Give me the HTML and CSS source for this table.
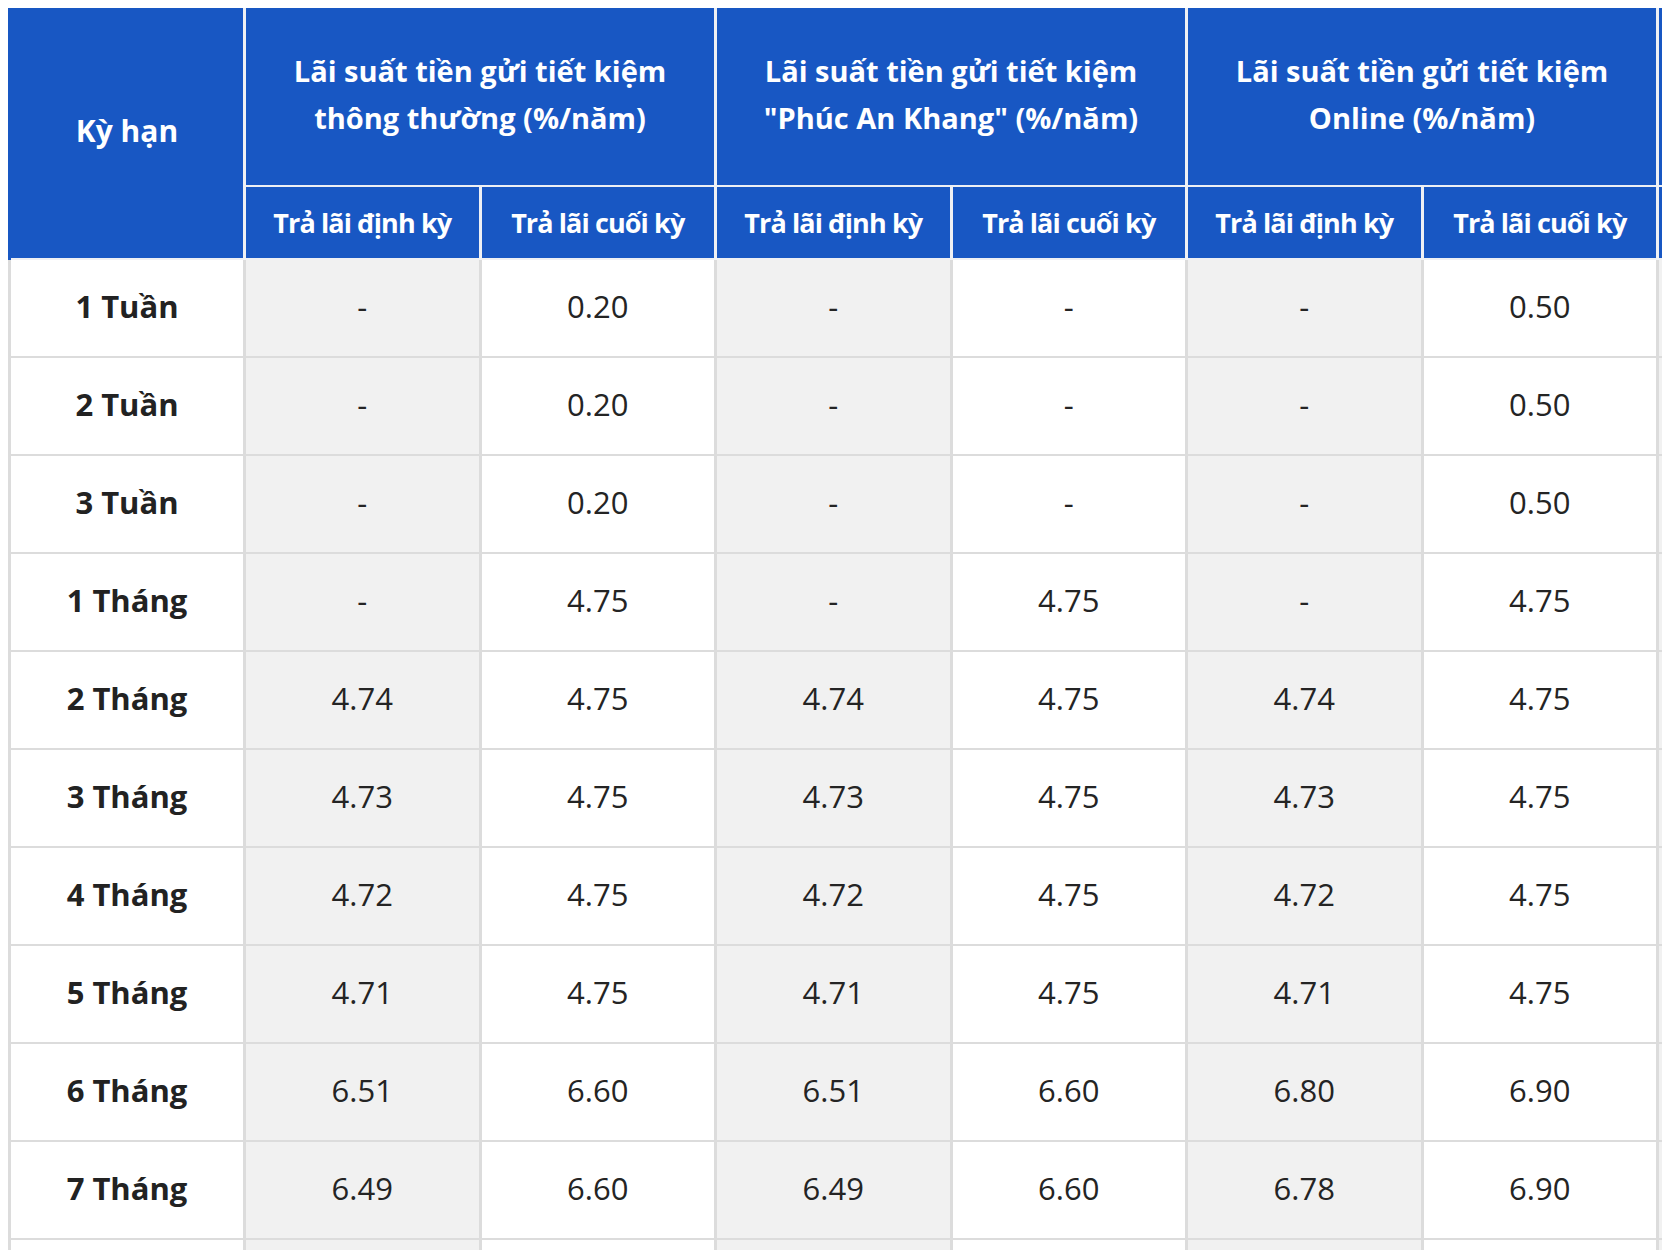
FILE: index.html
```html
<!DOCTYPE html>
<html lang="vi">
<head>
<meta charset="utf-8">
<title>Lãi suất tiền gửi tiết kiệm</title>
<link rel="stylesheet" href="styles.css">
</head>
<body>
<div class="wrap">
<table class="rates">
  <colgroup>
    <col class="c-term">
    <col class="c-val"><col class="c-val">
    <col class="c-val"><col class="c-val">
    <col class="c-val"><col class="c-val">
    <col class="c-val"><col class="c-val">
  </colgroup>
  <thead>
    <tr class="h1">
      <th rowspan="2" class="term-h">Kỳ hạn</th>
      <th colspan="2">Lãi suất tiền gửi tiết kiệm<br>thông thường (%/năm)</th>
      <th colspan="2">Lãi suất tiền gửi tiết kiệm<br>"Phúc An Khang" (%/năm)</th>
      <th colspan="2">Lãi suất tiền gửi tiết kiệm<br>Online (%/năm)</th>
      <th colspan="2">Lãi suất tiền gửi tiết kiệm<br>Bậc thang (%/năm)</th>
    </tr>
    <tr class="h2">
      <th class="sub">Trả lãi định kỳ</th><th class="sub">Trả lãi cuối kỳ</th>
      <th class="sub">Trả lãi định kỳ</th><th class="sub">Trả lãi cuối kỳ</th>
      <th class="sub">Trả lãi định kỳ</th><th class="sub">Trả lãi cuối kỳ</th>
      <th class="sub">Trả lãi định kỳ</th><th class="sub">Trả lãi cuối kỳ</th>
    </tr>
  </thead>
  <tbody>
    <tr><td class="term">1 Tuần</td><td class="alt">-</td><td>0.20</td><td class="alt">-</td><td>-</td><td class="alt">-</td><td>0.50</td><td class="alt">-</td><td>-</td></tr>
    <tr><td class="term">2 Tuần</td><td class="alt">-</td><td>0.20</td><td class="alt">-</td><td>-</td><td class="alt">-</td><td>0.50</td><td class="alt">-</td><td>-</td></tr>
    <tr><td class="term">3 Tuần</td><td class="alt">-</td><td>0.20</td><td class="alt">-</td><td>-</td><td class="alt">-</td><td>0.50</td><td class="alt">-</td><td>-</td></tr>
    <tr><td class="term">1 Tháng</td><td class="alt">-</td><td>4.75</td><td class="alt">-</td><td>4.75</td><td class="alt">-</td><td>4.75</td><td class="alt">-</td><td>4.75</td></tr>
    <tr><td class="term">2 Tháng</td><td class="alt">4.74</td><td>4.75</td><td class="alt">4.74</td><td>4.75</td><td class="alt">4.74</td><td>4.75</td><td class="alt">4.74</td><td>4.75</td></tr>
    <tr><td class="term">3 Tháng</td><td class="alt">4.73</td><td>4.75</td><td class="alt">4.73</td><td>4.75</td><td class="alt">4.73</td><td>4.75</td><td class="alt">4.73</td><td>4.75</td></tr>
    <tr><td class="term">4 Tháng</td><td class="alt">4.72</td><td>4.75</td><td class="alt">4.72</td><td>4.75</td><td class="alt">4.72</td><td>4.75</td><td class="alt">4.72</td><td>4.75</td></tr>
    <tr><td class="term">5 Tháng</td><td class="alt">4.71</td><td>4.75</td><td class="alt">4.71</td><td>4.75</td><td class="alt">4.71</td><td>4.75</td><td class="alt">4.71</td><td>4.75</td></tr>
    <tr><td class="term">6 Tháng</td><td class="alt">6.51</td><td>6.60</td><td class="alt">6.51</td><td>6.60</td><td class="alt">6.80</td><td>6.90</td><td class="alt">6.51</td><td>6.60</td></tr>
    <tr><td class="term">7 Tháng</td><td class="alt">6.49</td><td>6.60</td><td class="alt">6.49</td><td>6.60</td><td class="alt">6.78</td><td>6.90</td><td class="alt">6.49</td><td>6.60</td></tr>
    <tr><td class="term">8 Tháng</td><td class="alt">6.47</td><td>6.60</td><td class="alt">6.47</td><td>6.60</td><td class="alt">6.76</td><td>6.90</td><td class="alt">6.47</td><td>6.60</td></tr>
  </tbody>
</table>
</div>
</body>
</html>
```
FILE: styles.css
```css
html, body {
  margin: 0;
  padding: 0;
  background: #ffffff;
  overflow: hidden;
}

.wrap {
  width: 100vw;
  height: 100vh;
  overflow: hidden;
  padding: 8px 0 0 8px;
  box-sizing: border-box;
}

.rates {
  border-collapse: collapse;
  table-layout: fixed;
  width: 2119px;
  font-family: "Open Sans", "Noto Sans", "Lato", sans-serif;
  color: #242424;
}

.c-term { width: 235px; }
.c-val { width: 235.5px; }

.rates th,
.rates td {
  border-style: solid;
  border-color: #dcdcdc;
  border-width: 2px 3px;
  padding: 0 6px;
  text-align: center;
  vertical-align: middle;
}

.rates th {
  background: #1857c3;
  color: #ffffff;
  font-weight: 700;
  font-size: 29px;
  line-height: 47px;
  border-color: #eef0f4;
}

.rates th.sub {
  font-size: 27px;
  letter-spacing: -0.9px;
}

.rates thead tr.h1 th {
  border-top-color: #1857c3;
  padding-bottom: 8px;
}

.rates th.term-h {
  border-left-color: #1857c3;
  padding-bottom: 0;
  font-size: 30px;
}

.h1 { height: 177px; }
.h2 { height: 73px; }

.rates tbody tr { height: 98px; }

.rates td {
  font-size: 31px;
  font-weight: 400;
  background: #ffffff;
  padding-top: 0;
  padding-bottom: 4px;
}

.rates td.alt {
  background: #f1f1f1;
}

.rates td.term {
  font-weight: 700;
  color: #222222;
}
```
